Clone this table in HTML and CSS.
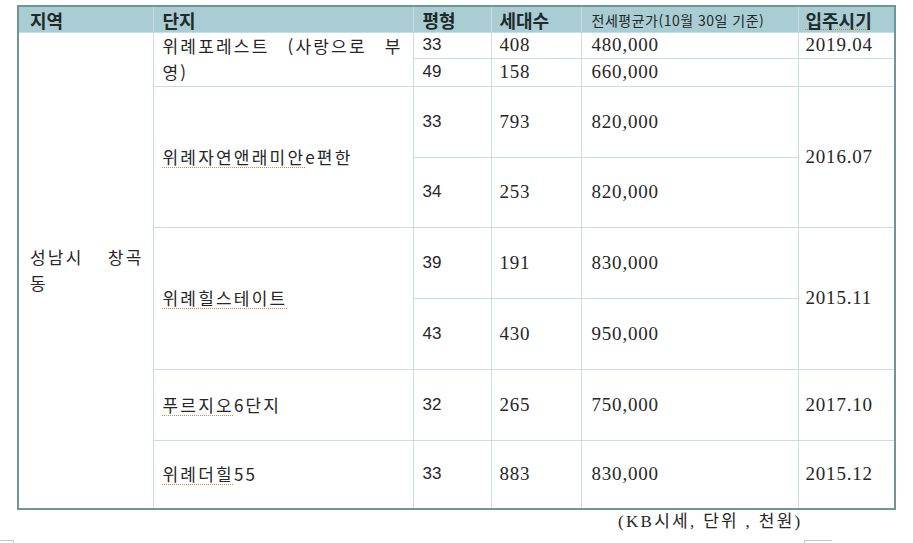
FILE: index.html
```html
<!DOCTYPE html>
<html lang="ko">
<head>
<meta charset="utf-8">
<title>위례 전세 시세</title>
<link rel="stylesheet" href="styles.css">
</head>
<body>
<div class="page">
  <div class="tbl-wrap">
    <table class="tbl">
      <colgroup>
        <col class="c1"><col class="c2"><col class="c3"><col class="c4"><col class="c5"><col class="c6">
      </colgroup>
      <thead>
        <tr class="rh">
          <th class="k-region">지역</th>
          <th class="k-name">단지</th>
          <th class="k-py">평형</th>
          <th class="k-hh">세대수</th>
          <th class="k-pr th-small">전세평균가(10월 30일 기준)</th>
          <th class="k-dt"><span class="spell spell-h">입주시기</span></th>
        </tr>
      </thead>
      <tbody>
        <tr class="r1">
          <td rowspan="8" class="k-region region">
            <div class="jline"><span>성남시</span><span>창곡</span></div>
            <div>동</div>
          </td>
          <td rowspan="2" class="k-name name two">
            <div class="jline"><span>위례포레스트</span><span>(사랑으로</span><span>부</span></div>
            <div>영)</div>
          </td>
          <td class="k-py py">33</td>
          <td class="k-hh num">408</td>
          <td class="k-pr num">480,000</td>
          <td class="k-dt num">2019.04</td>
        </tr>
        <tr class="r2">
          <td class="k-py py">49</td>
          <td class="k-hh num">158</td>
          <td class="k-pr num">660,000</td>
          <td class="k-dt"></td>
        </tr>
        <tr class="r3">
          <td rowspan="2" class="k-name name"><span class="spell">위례자연앤래미안</span>e편한</td>
          <td class="k-py py">33</td>
          <td class="k-hh num">793</td>
          <td class="k-pr num">820,000</td>
          <td rowspan="2" class="k-dt num">2016.07</td>
        </tr>
        <tr class="r4">
          <td class="k-py py">34</td>
          <td class="k-hh num">253</td>
          <td class="k-pr num">820,000</td>
        </tr>
        <tr class="r5">
          <td rowspan="2" class="k-name name"><span class="spell">위례힐스테이트</span></td>
          <td class="k-py py">39</td>
          <td class="k-hh num">191</td>
          <td class="k-pr num">830,000</td>
          <td rowspan="2" class="k-dt num">2015.11</td>
        </tr>
        <tr class="r6">
          <td class="k-py py">43</td>
          <td class="k-hh num">430</td>
          <td class="k-pr num">950,000</td>
        </tr>
        <tr class="r7">
          <td class="k-name name"><span class="spell">푸르지오</span>6단지</td>
          <td class="k-py py">32</td>
          <td class="k-hh num">265</td>
          <td class="k-pr num">750,000</td>
          <td class="k-dt num">2017.10</td>
        </tr>
        <tr class="r8">
          <td class="k-name name"><span class="spell">위례더힐</span>55</td>
          <td class="k-py py">33</td>
          <td class="k-hh num">883</td>
          <td class="k-pr num">830,000</td>
          <td class="k-dt num">2015.12</td>
        </tr>
      </tbody>
    </table>
  </div>
  <p class="caption">(KB시세, 단위 , 천원)</p>
  <div class="mark mark-left"></div>
  <div class="mark mark-right"></div>
</div>
</body>
</html>
```
FILE: styles.css
```css
html, body {
  margin: 0;
  padding: 0;
  background: #ffffff;
}

.page {
  position: relative;
  width: 913px;
  height: 543px;
  overflow: hidden;
  color: #262626;
  font-family: "Noto Sans CJK KR", "Liberation Sans", sans-serif;
}

.tbl-wrap {
  box-sizing: border-box;
  margin: 5px 0 0 17px;
  width: 879px;
  border: 2px solid #6c9799;
}

.tbl {
  width: 100%;
  table-layout: fixed;
  border-collapse: collapse;
  border-style: hidden;
}

.c1 { width: 134px; }
.c2 { width: 260px; }
.c3 { width: 78px; }
.c4 { width: 90px; }
.c5 { width: 217px; }
.c6 { width: 96px; }

.tbl th,
.tbl td {
  border: 1px solid #c9dde1;
  padding: 0 4px 0 9px;
  text-align: left;
  vertical-align: middle;
  white-space: nowrap;
}

.tbl td {
  overflow: hidden;
}

.tbl th {
  background: #a9cdd3;
  font-size: 18px;
  font-weight: 700;
  line-height: 22px;
  color: #1f2a2b;
  padding-top: 1px;
}

.tbl .k-region { padding-left: 11px; }
.tbl .k-name { padding-left: 9px; }
.tbl .k-py { padding-left: 9px; }
.tbl .k-hh { padding-left: 8px; }
.tbl .k-pr { padding-left: 10px; }
.tbl .k-dt { padding-left: 7px; }

.tbl .th-small {
  font-size: 14px;
  font-weight: 400;
  letter-spacing: 0.5px;
}

.rh { height: 25px; }
.r1 { height: 26px; }
.r2 { height: 28px; }
.r3 { height: 71px; }
.r4 { height: 70px; }
.r5 { height: 71px; }
.r6 { height: 71px; }
.r7 { height: 71px; }
.r8 { height: 68px; }

.tbl td {
  font-size: 17px;
  line-height: 22px;
  letter-spacing: 2.2px;
}

.tbl td.two,
.tbl td.region {
  line-height: 26px;
}

.tbl td.region {
  padding-right: 9px;
}

.tbl td.name {
  padding-right: 10px;
}

.jline {
  display: flex;
  justify-content: space-between;
}

.tbl td.py {
  font-family: "Liberation Sans", sans-serif;
  font-size: 17px;
  letter-spacing: 0;
}

.tbl td.num {
  font-family: "Liberation Serif", serif;
  font-size: 19px;
  letter-spacing: 0.8px;
}

.spell {
  text-decoration: underline dotted #e0883a;
  text-decoration-thickness: 1px;
  text-underline-offset: 3px;
}

.spell-h {
  text-underline-offset: 1px;
  text-decoration-color: #c9893a;
}

.caption {
  margin: 2px 0 0 618px;
  font-family: "Liberation Serif", "Noto Sans CJK KR", serif;
  font-size: 17px;
  line-height: 20px;
  letter-spacing: 2.3px;
  color: #262626;
}

.mark {
  position: absolute;
  top: 540px;
  height: 6px;
  border-top: 1px solid #c8c8c8;
}

.mark-left {
  left: 0;
  width: 13px;
  border-right: 1px solid #c8c8c8;
}

.mark-right {
  left: 804px;
  width: 27px;
  border-left: 1px solid #c8c8c8;
}
```
